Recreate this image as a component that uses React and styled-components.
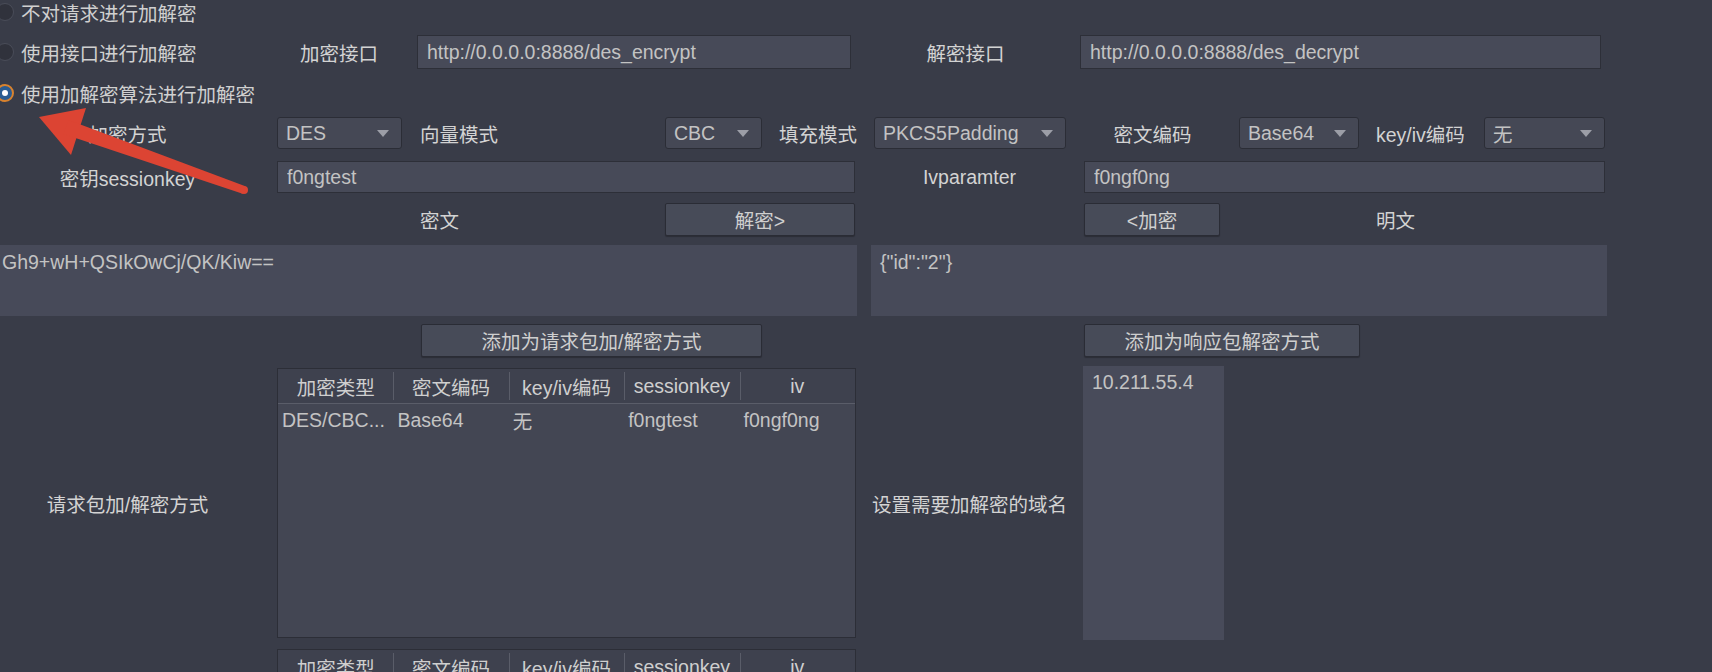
import React from 'react';
import styled, {createGlobalStyle} from 'styled-components';

const GlobalStyle = createGlobalStyle`
    html, body {
        margin: 0;
        padding: 0;
        background: #393c48;
        overflow: hidden;
    }
    body {
        font-family: "Liberation Sans", "Noto Sans CJK SC", sans-serif;
        font-size: 19.5px;
        color: #d3d3d3;
    }
`;

const Page = styled.div`
    position: relative;
    width: 1712px;
    height: 672px;
    overflow: hidden;
    display: flex;
    flex-direction: column;
`;

const Row = styled.div`
    display: flex;
    align-items: ${p => p.$align || 'center'};
    height: ${p => p.$h}px;
    margin-top: ${p => p.$top || 0}px;
    flex-shrink: 0;
`;

const Label = styled.div`
    width: ${p => p.$w}px;
    padding-left: ${p => p.$pad || 0}px;
    box-sizing: border-box;
    text-align: ${p => p.$left ? 'left' : 'center'};
    white-space: nowrap;
    color: #d3d3d3;
    flex-shrink: 0;
`;

const RadioItem = styled.label`
    display: flex;
    align-items: center;
    width: ${p => p.$w || 255}px;
    margin-left: -4px;
    gap: 7px;
    white-space: nowrap;
    color: #d0d0d0;
`;

const RadioDot = styled.span`
    width: 18px;
    height: 18px;
    border-radius: 50%;
    box-sizing: border-box;
    flex-shrink: 0;
    position: relative;
    background: ${p => p.$checked ? '#2a5c92' : '#30323c'};
    border: ${p => p.$checked ? '2px solid #d8822e' : '1px solid #4a4d59'};
    &::after {
        content: '';
        display: ${p => p.$checked ? 'block' : 'none'};
        position: absolute;
        left: 50%;
        top: 50%;
        width: 6px;
        height: 6px;
        margin: -3px 0 0 -3px;
        border-radius: 50%;
        background: #ffffff;
    }
`;

const TextField = styled.input`
    width: ${p => p.$w}px;
    margin-left: ${p => p.$ml || 0}px;
    height: 100%;
    box-sizing: border-box;
    background: #474a58;
    border: 1px solid #2d2f38;
    color: #c3c3c3;
    font: inherit;
    padding: 0 9px;
    outline: none;
    flex-shrink: 0;
`;

const Select = styled.div`
    width: ${p => p.$w}px;
    margin-left: ${p => p.$ml || 0}px;
    height: 100%;
    box-sizing: border-box;
    background: #454855;
    border: 1px solid #2b2d36;
    border-radius: 3px;
    color: #c3c3c3;
    padding: 0 8px;
    display: flex;
    align-items: center;
    justify-content: space-between;
    flex-shrink: 0;
    &::after {
        content: '';
        border-left: 6px solid transparent;
        border-right: 6px solid transparent;
        border-top: 7px solid #9c9ea7;
        margin-right: 4px;
    }
`;

const Button = styled.div`
    width: ${p => p.$w}px;
    margin-left: ${p => p.$ml || 0}px;
    height: 100%;
    box-sizing: border-box;
    background: #474b58;
    border: 1px solid #2a2c35;
    border-radius: 2px;
    box-shadow: 0 1px 1px rgba(0, 0, 0, 0.25);
    color: #cfcfcf;
    display: flex;
    align-items: center;
    justify-content: center;
    flex-shrink: 0;
`;

const TextArea = styled.textarea`
    width: ${p => p.$w}px;
    margin-left: ${p => p.$ml || 0}px;
    height: 100%;
    box-sizing: border-box;
    background: #474a59;
    border: none;
    color: #c3c3c3;
    font: inherit;
    padding: 6px ${p => p.$padX || 2}px;
    resize: none;
    outline: none;
    flex-shrink: 0;
`;

const Table = styled.div`
    width: 579px;
    margin-left: ${p => p.$ml || 0}px;
    height: ${p => p.$h}px;
    align-self: ${p => p.$self || 'center'};
    box-sizing: border-box;
    border: 1px solid #2c2e37;
    background: #434653;
    display: flex;
    flex-direction: column;
    flex-shrink: 0;
`;

const HeaderRow = styled.div`
    display: grid;
    grid-template-columns: repeat(5, 1fr);
    height: 34px;
    flex-shrink: 0;
    background: #3e414e;
    border-bottom: 1px solid #5a5d69;
`;

const HeaderCell = styled.div`
    display: flex;
    align-items: center;
    justify-content: center;
    color: #cfcfcf;
    white-space: nowrap;
    position: relative;
    & + &::before {
        content: '';
        position: absolute;
        left: 0;
        top: 3px;
        bottom: 3px;
        border-left: 1px solid #5a5d69;
    }
`;

const BodyRow = styled.div`
    display: grid;
    grid-template-columns: repeat(5, 1fr);
    height: 32px;
`;

const BodyCell = styled.div`
    display: flex;
    align-items: center;
    padding-left: 4px;
    color: #c3c3c3;
    white-space: nowrap;
    overflow: hidden;
`;

const DomainList = styled.div`
    width: 141px;
    height: 100%;
    box-sizing: border-box;
    background: #484b5a;
    color: #c3c3c3;
    padding: 5px 9px;
    flex-shrink: 0;
`;

const ArrowLayer = styled.svg`
    position: absolute;
    left: 0;
    top: 0;
    pointer-events: none;
`;

const columns = ['加密类型', '密文编码', 'key/iv编码', 'sessionkey', 'iv'];
const rows = [['DES/CBC...', 'Base64', '无', 'f0ngtest', 'f0ngf0ng']];

const MethodTable = ({h, ml, self, data}) => (
    <Table $h={h} $ml={ml} $self={self}>
        <HeaderRow>
            {columns.map(c => <HeaderCell key={c}>{c}</HeaderCell>)}
        </HeaderRow>
        {data.map((r, i) => (
            <BodyRow key={i}>
                {r.map((v, j) => <BodyCell key={j}>{v}</BodyCell>)}
            </BodyRow>
        ))}
    </Table>
);

const App = () => {
    return (
        <>
            <GlobalStyle />
            <Page>
                <Row $h={24}>
                    <RadioItem><RadioDot />不对请求进行加解密</RadioItem>
                </Row>
                <Row $h={34} $top={11}>
                    <RadioItem><RadioDot />使用接口进行加解密</RadioItem>
                    <Label $w={166} $pad={10}>加密接口</Label>
                    <TextField $w={434} readOnly value="http://0.0.0.0:8888/des_encrypt" />
                    <Label $w={229}>解密接口</Label>
                    <TextField $w={521} readOnly value="http://0.0.0.0:8888/des_decrypt" />
                </Row>
                <Row $h={32} $top={8}>
                    <RadioItem><RadioDot $checked />使用加解密算法进行加解密</RadioItem>
                </Row>
                <Row $h={32} $top={8}>
                    <Label $w={255}>加密方式</Label>
                    <Select $w={125} $ml={22}>DES</Select>
                    <Label $w={263} $pad={18} $left>向量模式</Label>
                    <Select $w={97}>CBC</Select>
                    <Label $w={112} $pad={17} $left>填充模式</Label>
                    <Select $w={192}>PKCS5Padding</Select>
                    <Label $w={173}>密文编码</Label>
                    <Select $w={120}>Base64</Select>
                    <Label $w={125} $pad={17} $left>key/iv编码</Label>
                    <Select $w={121}>无</Select>
                </Row>
                <Row $h={32} $top={12}>
                    <Label $w={255}>密钥sessionkey</Label>
                    <TextField $w={578} $ml={22} readOnly value="f0ngtest" />
                    <Label $w={229}>Ivparamter</Label>
                    <TextField $w={521} readOnly value="f0ngf0ng" />
                </Row>
                <Row $h={33} $top={10}>
                    <Label $w={665} $pad={420} $left>密文</Label>
                    <Button $w={190}>解密&gt;</Button>
                    <Button $w={136} $ml={229}>&lt;加密</Button>
                    <Label $w={200} $pad={156} $left>明文</Label>
                </Row>
                <Row $h={71} $top={9}>
                    <TextArea $w={857} readOnly value="Gh9+wH+QSIkOwCj/QK/Kiw==" />
                    <TextArea $w={736} $ml={14} $padX={9} readOnly value={'{"id":"2"}'} />
                </Row>
                <Row $h={33} $top={8}>
                    <Button $w={341} $ml={421}>添加为请求包加/解密方式</Button>
                    <Button $w={276} $ml={322}>添加为响应包解密方式</Button>
                </Row>
                <Row $h={274} $top={9}>
                    <Label $w={255}>请求包加/解密方式</Label>
                    <MethodTable h={270} ml={22} data={rows} />
                    <Label $w={227}>设置需要加解密的域名</Label>
                    <DomainList>10.211.55.4</DomainList>
                </Row>
                <Row $h={40} $top={9} $align="flex-start">
                    <MethodTable h={60} ml={277} self="flex-start" data={[]} />
                </Row>
                <ArrowLayer width="260" height="205" viewBox="0 0 260 205">
                    <polygon points="39,117 86,108 71,155" fill="#dc4433" />
                    <polygon points="63.6,134 68.4,120 245.4,186.2 242.6,193.8" fill="#dc4433" />
                    <circle cx="244" cy="190" r="4" fill="#dc4433" />
                </ArrowLayer>
            </Page>
        </>
    );
};

export default App;
